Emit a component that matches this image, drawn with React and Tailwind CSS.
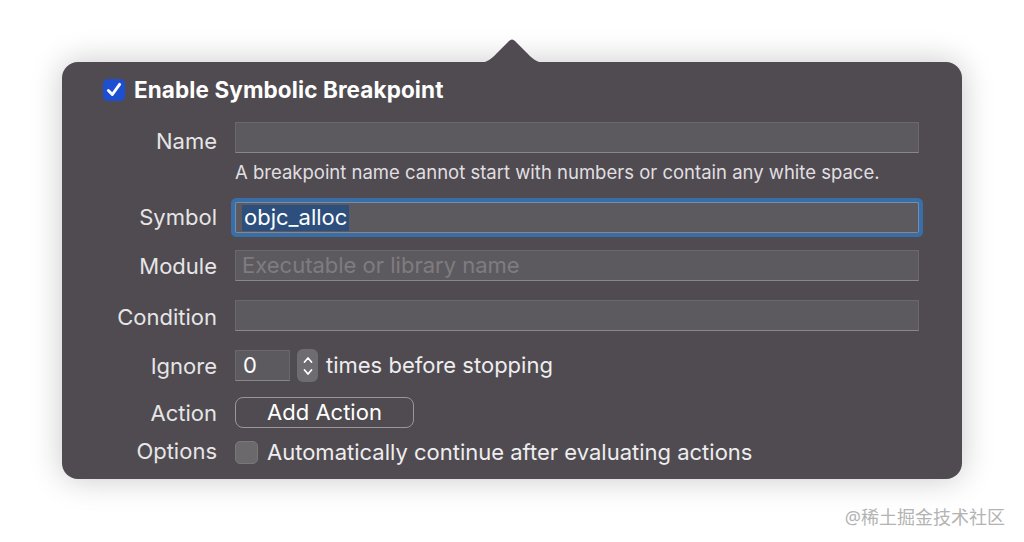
import React from "react";

const font = { fontFamily: "Inter, 'Noto Sans', sans-serif" };

function Label({ children, className = "" }) {
  return (
    <div className={"w-[173px] shrink-0 text-right pr-[18px] text-[22px] text-[#e6e5e7] leading-none " + className}>
      {children}
    </div>
  );
}

function Field({ children, className = "" }) {
  return (
    <div
      className={
        "flex-1 h-[31px] bg-[#5d5a5f] border border-[#6b686c] border-b-[#8a878b] flex items-center px-[6px] text-[22px] " +
        className
      }
    >
      {children}
    </div>
  );
}

export default function App() {
  return (
    <div className="w-[1024px] h-[542px] bg-white overflow-hidden" style={font}>
      <div className="relative mt-[62px] ml-[62px] w-[900px] h-[417px] rounded-[16px] bg-[#4f4b50] shadow-[0_0_32px_rgba(0,0,0,0.22)]">
        {/* popover arrow */}
        <svg className="absolute left-[408px] top-[-24px]" width="84" height="26" viewBox="0 0 84 26">
          <path
            d="M0 26 C14 26 20 23 27 15 L39 3 Q42 0 45 3 L57 15 C64 23 70 26 84 26 Z"
            fill="#4f4b50"
          />
        </svg>

        <div className="pt-[17px] pl-[41px] flex items-center gap-[9px] h-[39px]">
          <div className="w-[22px] h-[22px] rounded-[5px] bg-[#1d4fd0] flex items-center justify-center">
            <svg width="18" height="18" viewBox="0 0 16 16">
              <path d="M3 8.5 L6.5 12 L13 3" stroke="white" strokeWidth="2.6" fill="none" strokeLinecap="round" strokeLinejoin="round" />
            </svg>
          </div>
          <span className="text-[22.5px] font-bold text-white tracking-[0.1px]">Enable Symbolic Breakpoint</span>
        </div>

        <div className="pr-[43px]">
          <div className="mt-[21px] flex items-center h-[31px]">
            <Label className="pt-[6px]">Name</Label>
            <Field />
          </div>
          <div className="mt-[8px] pl-[173px] text-[18.5px] leading-[22px] text-[#e0dfe1]">
            A breakpoint name cannot start with numbers or contain any white space.
          </div>
          <div className="mt-[19px] flex items-center h-[31px]">
            <Label className="pb-[2px]">Symbol</Label>
            <Field className="ring-[4px] ring-[#3a6ea6] rounded-[2px] border-[#6f8fb5]">
              <span className="bg-[#2c4f7d] text-white h-[26px] px-[2px] flex items-center">objc_alloc</span>
            </Field>
          </div>
          <div className="mt-[17px] flex items-center h-[31px]">
            <Label>Module</Label>
            <Field>
              <span className="text-[#7f7c80]">Executable or library name</span>
            </Field>
          </div>
          <div className="mt-[19px] flex items-center h-[31px]">
            <Label className="pt-[3px]">Condition</Label>
            <Field />
          </div>
          <div className="mt-[19px] flex items-center h-[31px]">
            <Label>Ignore</Label>
            <div className="w-[55px] h-[31px] bg-[#5d5a5f] border border-[#6b686c] border-b-[#8a878b] flex items-center px-[7px] text-[22px] text-white">
              0
            </div>
            <div className="ml-[7px] w-[21px] h-[33px] rounded-[6px] bg-[#6f6c71] flex flex-col items-center justify-center">
              <svg width="12" height="28" viewBox="0 0 12 28">
                <path d="M2.5 10 L6 6 L9.5 10" stroke="white" strokeWidth="1.8" fill="none" strokeLinecap="round" strokeLinejoin="round" />
                <path d="M2.5 18 L6 22 L9.5 18" stroke="white" strokeWidth="1.8" fill="none" strokeLinecap="round" strokeLinejoin="round" />
              </svg>
            </div>
            <span className="ml-[8px] text-[22px] text-[#eeedef]">times before stopping</span>
          </div>
          <div className="mt-[16px] flex items-center h-[31px]">
            <Label>Action</Label>
            <button className="w-[179px] h-[31px] rounded-[8px] border-[1.5px] border-[#9a979b] text-[22px] text-white flex items-center justify-center">
              Add Action
            </button>
          </div>
          <div className="mt-[12px] flex items-center h-[24px]">
            <Label className="pb-[3px]">Options</Label>
            <div className="w-[23px] h-[23px] rounded-[5px] bg-[#6c696d] border border-[#7a777b]" />
            <span className="ml-[9px] text-[22px] text-[#eeedef]">Automatically continue after evaluating actions</span>
          </div>
        </div>
      </div>
      <div
        className="mt-[25px] pr-[19px] text-right text-[18px] text-[#b3b3b3]"
        style={{ fontFamily: "'Noto Sans', 'Noto Sans CJK SC', sans-serif" }}
      >
        @稀土掘金技术社区
      </div>
    </div>
  );
}
